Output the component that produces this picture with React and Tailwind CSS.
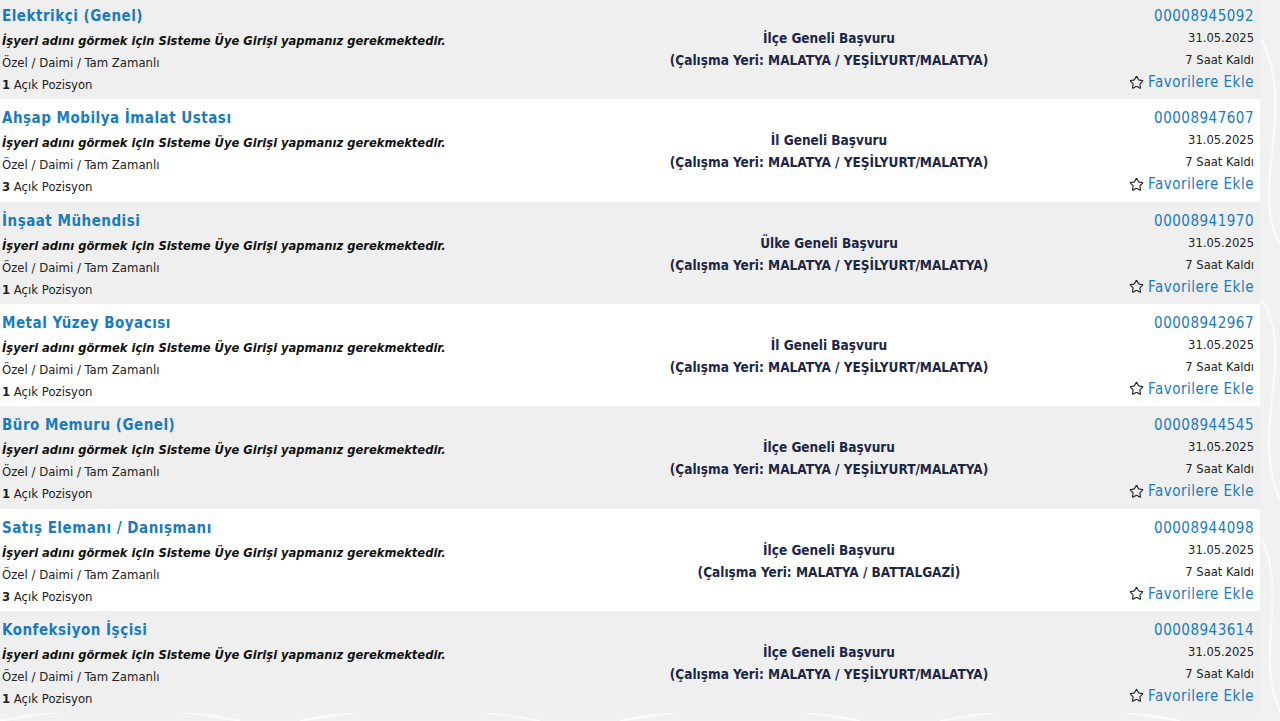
import React from "react";
import { Star } from "lucide-react";

const jobs = [
  { title: "Elektrikçi (Genel)", scope: "İlçe Geneli Başvuru", place: "MALATYA / YEŞİLYURT/MALATYA", count: 1, no: "00008945092" },
  { title: "Ahşap Mobilya İmalat Ustası", scope: "İl Geneli Başvuru", place: "MALATYA / YEŞİLYURT/MALATYA", count: 3, no: "00008947607" },
  { title: "İnşaat Mühendisi", scope: "Ülke Geneli Başvuru", place: "MALATYA / YEŞİLYURT/MALATYA", count: 1, no: "00008941970" },
  { title: "Metal Yüzey Boyacısı", scope: "İl Geneli Başvuru", place: "MALATYA / YEŞİLYURT/MALATYA", count: 1, no: "00008942967" },
  { title: "Büro Memuru (Genel)", scope: "İlçe Geneli Başvuru", place: "MALATYA / YEŞİLYURT/MALATYA", count: 1, no: "00008944545" },
  { title: "Satış Elemanı / Danışmanı", scope: "İlçe Geneli Başvuru", place: "MALATYA / BATTALGAZİ", count: 3, no: "00008944098" },
  { title: "Konfeksiyon İşçisi", scope: "İlçe Geneli Başvuru", place: "MALATYA / YEŞİLYURT/MALATYA", count: 1, no: "00008943614" },
];

function JobRow({ job, odd }) {
  return (
    <div className={`grid grid-cols-[660px_338px_1fr] h-[102.33px] ${odd ? "bg-white" : "bg-[#efefef]"}`}>
      {/* sol: başlık ve detaylar */}
      <div className="flex flex-col pl-[2px] pt-[8px]">
        <a href="#" className="text-[15px] leading-[22px] font-bold text-[#1a7bbd] tracking-[0.5px]">{job.title}</a>
        <div className="mt-[3px] text-[12.8px] leading-[22px] font-bold italic text-[#111]">
          İşyeri adını görmek için Sisteme Üye Girişi yapmanız gerekmektedir.
        </div>
        <div className="text-[13px] leading-[22px] text-[#222]">Özel / Daimi / Tam Zamanlı</div>
        <div className="text-[13px] leading-[22px] text-[#222]">
          <b>{job.count}</b> Açık Pozisyon
        </div>
      </div>

      {/* orta: başvuru kapsamı */}
      <div className="flex flex-col items-center justify-center pt-[2px] text-[13.5px] leading-[22px] font-bold text-[#1c2645]">
        <div>{job.scope}</div>
        <div>(Çalışma Yeri: {job.place})</div>
      </div>

      {/* sağ: ilan no ve favori */}
      <div className="flex flex-col items-end pr-[6px] pt-[8px]">
        <a href="#" className="text-[15px] leading-[22px] text-[#1a7bbd] tracking-[0.5px]">{job.no}</a>
        <div className="text-[12.8px] leading-[22px] text-[#222]">31.05.2025</div>
        <div className="text-[12.8px] leading-[22px] text-[#222]">7 Saat Kaldı</div>
        <a href="#" className="flex items-center gap-[4px] text-[15px] leading-[22px] text-[#1a7bbd] tracking-[0.5px]">
          <Star size={15} strokeWidth={1.8} className="text-[#222]" />
          Favorilere Ekle
        </a>
      </div>
    </div>
  );
}

export default function App() {
  return (
    <div
      className="relative min-h-[721px] overflow-hidden bg-[#f1f1f1]"
      style={{ fontFamily: "'DejaVu Sans Condensed', Tahoma, 'DejaVu Sans', sans-serif" }}
    >
      {/* arka plan süsü */}
      <svg className="absolute inset-0 h-full w-full" viewBox="0 0 1280 721" preserveAspectRatio="none">
        <g fill="none" stroke="#fbfbfb" strokeWidth="2">
          <path d="M1262 40 C1300 120 1240 200 1290 260" />
          <path d="M1262 300 C1300 360 1240 440 1290 520" />
          <path d="M1262 540 C1290 600 1250 660 1285 721" />
          <path d="M0 721 C80 705 160 705 240 721" />
          <path d="M300 721 C380 705 460 705 540 721" />
          <path d="M620 721 C700 705 780 705 860 721" />
          <path d="M940 721 C1020 705 1100 705 1180 721" />
        </g>
      </svg>
      <div className="relative -mt-[3px] w-[1260px]">
        {jobs.map((job, i) => (
          <JobRow key={job.no} job={job} odd={i % 2 === 1} />
        ))}
      </div>
    </div>
  );
}
